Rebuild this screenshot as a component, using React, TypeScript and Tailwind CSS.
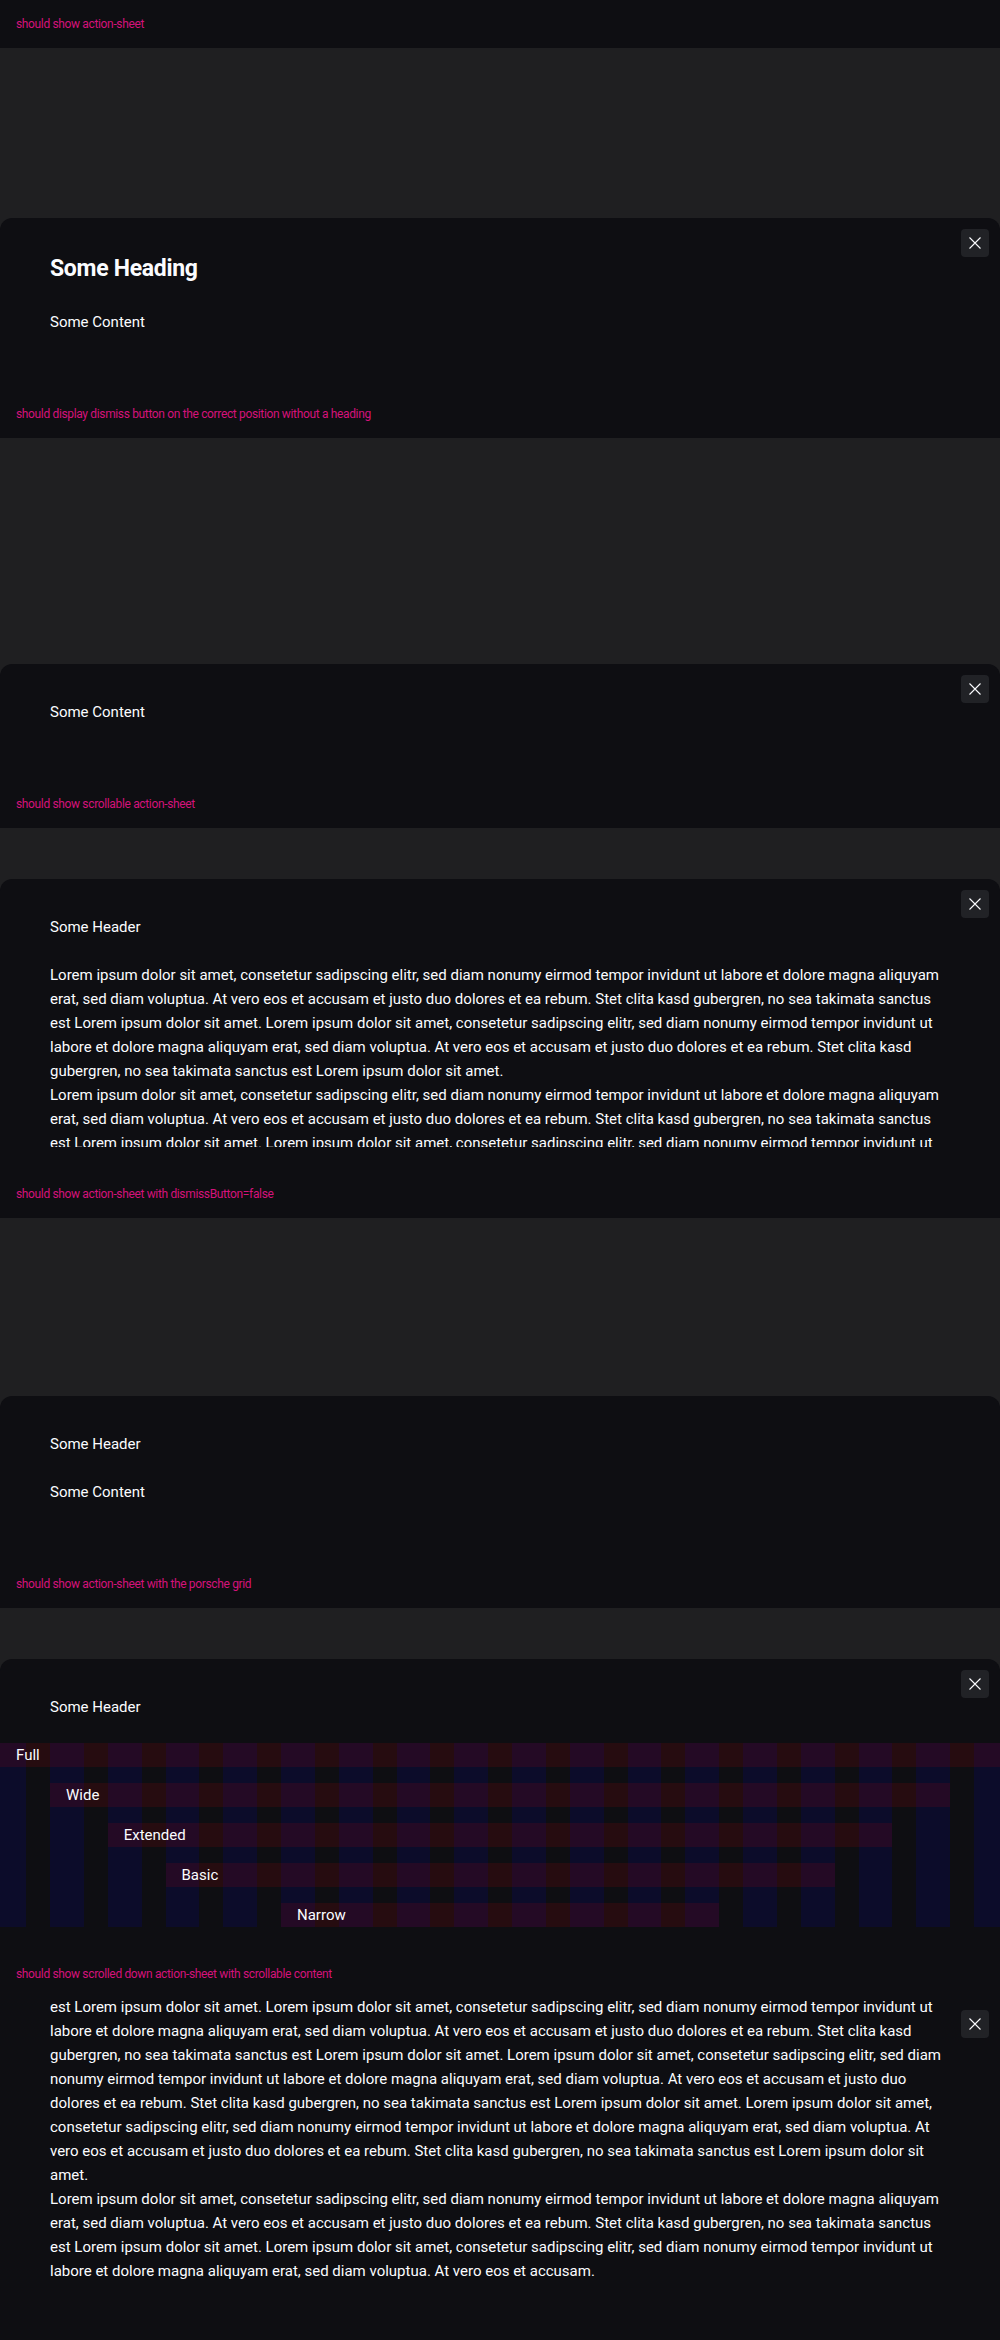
import type { ReactNode } from "react";

const loremParagraph = [
  "Lorem ipsum dolor sit amet, consetetur sadipscing elitr, sed diam nonumy eirmod tempor invidunt ut labore et dolore magna aliquyam",
  "erat, sed diam voluptua. At vero eos et accusam et justo duo dolores et ea rebum. Stet clita kasd gubergren, no sea takimata sanctus",
  "est Lorem ipsum dolor sit amet. Lorem ipsum dolor sit amet, consetetur sadipscing elitr, sed diam nonumy eirmod tempor invidunt ut",
  "labore et dolore magna aliquyam erat, sed diam voluptua. At vero eos et accusam et justo duo dolores et ea rebum. Stet clita kasd",
  "gubergren, no sea takimata sanctus est Lorem ipsum dolor sit amet.",
];

const scrolledFirst = [
  "est Lorem ipsum dolor sit amet. Lorem ipsum dolor sit amet, consetetur sadipscing elitr, sed diam nonumy eirmod tempor invidunt ut",
  "labore et dolore magna aliquyam erat, sed diam voluptua. At vero eos et accusam et justo duo dolores et ea rebum. Stet clita kasd",
  "gubergren, no sea takimata sanctus est Lorem ipsum dolor sit amet. Lorem ipsum dolor sit amet, consetetur sadipscing elitr, sed diam",
  "nonumy eirmod tempor invidunt ut labore et dolore magna aliquyam erat, sed diam voluptua. At vero eos et accusam et justo duo",
  "dolores et ea rebum. Stet clita kasd gubergren, no sea takimata sanctus est Lorem ipsum dolor sit amet. Lorem ipsum dolor sit amet,",
  "consetetur sadipscing elitr, sed diam nonumy eirmod tempor invidunt ut labore et dolore magna aliquyam erat, sed diam voluptua. At",
  "vero eos et accusam et justo duo dolores et ea rebum. Stet clita kasd gubergren, no sea takimata sanctus est Lorem ipsum dolor sit",
  "amet.",
];

const scrolledSecond = [
  "Lorem ipsum dolor sit amet, consetetur sadipscing elitr, sed diam nonumy eirmod tempor invidunt ut labore et dolore magna aliquyam",
  "erat, sed diam voluptua. At vero eos et accusam et justo duo dolores et ea rebum. Stet clita kasd gubergren, no sea takimata sanctus",
  "est Lorem ipsum dolor sit amet. Lorem ipsum dolor sit amet, consetetur sadipscing elitr, sed diam nonumy eirmod tempor invidunt ut",
  "labore et dolore magna aliquyam erat, sed diam voluptua. At vero eos et accusam.",
];

function Lines({ lines }: { lines: string[] }) {
  return (
    <p>
      {lines.map((l, i) => (
        <span key={i} className="block whitespace-nowrap">
          {l}
        </span>
      ))}
    </p>
  );
}

function DismissButton({ top = "top-[11px]" }: { top?: string }) {
  return (
    <button
      type="button"
      aria-label="Dismiss"
      className={`absolute right-[11px] ${top} z-10 flex h-7 w-7 items-center justify-center rounded-[4px] bg-[#212226]`}
    >
      <svg width="12" height="12" viewBox="0 0 12 12" fill="none">
        <path d="M0.5 0.5L11.5 11.5M11.5 0.5L0.5 11.5" stroke="#fbfcff" strokeWidth="1.1" />
      </svg>
    </button>
  );
}

function Label({ children }: { children: ReactNode }) {
  return (
    <div className="flex h-12 shrink-0 items-center bg-[#0e0e12] px-4 text-[12px] tracking-[-0.35px] text-[#d5127b]">
      {children}
    </div>
  );
}

function Section({ label, children }: { label: string; children: ReactNode }) {
  return (
    <div className="flex h-[390px] flex-col">
      <Label>{label}</Label>
      <div className="flex flex-1 flex-col justify-end bg-[#1f1f21]">{children}</div>
    </div>
  );
}

function Sheet({ children, dismiss = true, className = "" }: { children: ReactNode; dismiss?: boolean; className?: string }) {
  return (
    <div className={`relative rounded-t-xl bg-[#0e0e12] px-[50px] pt-9 text-[15px] leading-6 text-[#fbfcff] ${className}`}>
      {dismiss && <DismissButton />}
      {children}
    </div>
  );
}

function PorscheGrid() {
  const rows = [
    { label: "Full", span: "col-span-full" },
    { label: "Wide", span: "col-start-2 col-end-18" },
    { label: "Extended", span: "col-start-3 col-end-17" },
    { label: "Basic", span: "col-start-4 col-end-16" },
    { label: "Narrow", span: "col-start-6 col-end-14" },
  ];
  return (
    <div className="relative -mx-[50px] mt-6">
      {/* column guides behind the rows */}
      <div className="absolute inset-0 grid grid-cols-[26px_repeat(16,minmax(0,1fr))_26px] gap-x-6">
        {Array.from({ length: 18 }).map((_, i) => (
          <div key={i} className="bg-[rgba(0,0,255,0.1)]" />
        ))}
      </div>
      <div className="relative grid grid-cols-[26px_repeat(16,minmax(0,1fr))_26px] gap-x-6 gap-y-4">
        {rows.map((r) => (
          <div key={r.label} className={`${r.span} bg-[rgba(255,0,0,0.1)] px-4`}>
            {r.label}
          </div>
        ))}
      </div>
    </div>
  );
}

export default function App() {
  return (
    <div className="min-h-screen bg-[#0e0e12] font-['Roboto',sans-serif]">
      <Section label="should show action-sheet">
        <Sheet className="pb-14">
          <h2 className="text-[23px] font-bold leading-[30px] tracking-[-0.3px]">Some Heading</h2>
          <p className="mt-[26px]">Some Content</p>
        </Sheet>
      </Section>

      <Section label="should display dismiss button on the correct position without a heading">
        <Sheet className="pb-14">
          <p>Some Content</p>
        </Sheet>
      </Section>

      <Section label="should show scrollable action-sheet">
        <Sheet className="h-[291px] pb-[23px]">
          <h2>Some Header</h2>
          <div className="mt-6 h-[184px] overflow-hidden">
            <Lines lines={loremParagraph} />
            <Lines lines={loremParagraph} />
          </div>
        </Sheet>
      </Section>

      <Section label="should show action-sheet with dismissButton=false">
        <Sheet dismiss={false} className="pb-14">
          <h2>Some Header</h2>
          <p className="mt-6">Some Content</p>
        </Sheet>
      </Section>

      <Section label="should show action-sheet with the porsche grid">
        <Sheet className="h-[291px] pb-[23px]">
          <h2>Some Header</h2>
          <PorscheGrid />
        </Sheet>
      </Section>

      <div className="flex h-[390px] flex-col">
        <Label>should show scrolled down action-sheet with scrollable content</Label>
        <div className="relative flex-1 overflow-hidden bg-[#0e0e12] px-[50px] text-[15px] leading-6 text-[#fbfcff]">
          <DismissButton top="top-3" />
          <div className="-mt-[3px]">
            <Lines lines={scrolledFirst} />
            <Lines lines={scrolledSecond} />
          </div>
        </div>
      </div>
    </div>
  );
}
